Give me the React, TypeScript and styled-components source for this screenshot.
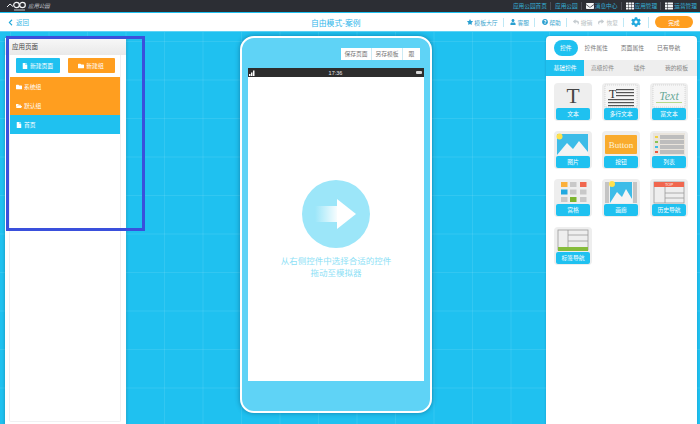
import React from 'react';
import styled, { createGlobalStyle } from 'styled-components';
import {
  FaChevronLeft, FaCog, FaEnvelope, FaFile, FaFolder, FaFolderOpen, FaQuestionCircle,
  FaReply, FaShare, FaStar, FaTh, FaThList, FaUser,
} from 'react-icons/fa';

const CYAN = '#1fc1f0';
const ORANGE = '#ff9e1f';

const GlobalStyle = createGlobalStyle`
  html, body { margin: 0; padding: 0; height: 100%; }
  body { font-family: "Noto Sans CJK SC", "Liberation Sans", sans-serif; overflow: hidden; }
`;

const Page = styled.div`
  position: relative;
  width: 700px;
  height: 424px;
  display: flex;
  flex-direction: column;
  overflow: hidden;
  background: ${CYAN};
`;

const TopBar = styled.div`
  height: 12px;
  flex: none;
  background: #2c2e34;
  display: flex;
  align-items: center;
  justify-content: space-between;
  padding-left: 7px;
  border-bottom: 1px solid ${CYAN};
`;

const Logo = styled.div`
  display: flex;
  align-items: center;
  gap: 1px;
  color: #c9ccd2;
  font-size: 5.4px;
  font-style: italic;
`;

const TopNav = styled.div`
  display: flex;
  align-items: center;
  color: #35aed6;
  font-size: 5.7px;
  line-height: 12px;
`;

const TopLink = styled.span`
  display: flex;
  align-items: center;
  gap: 1px;
  padding: 0 3px 0 4px;
  white-space: nowrap;
  border-left: ${(p) => (p.$first ? 'none' : '1px solid #4a4d55')};
  height: 8px;
  line-height: 8px;
  svg { color: #f2f4f6; font-size: 8px; }
`;

const ActionBar = styled.div`
  height: 18px;
  flex: none;
  background: #fff;
  display: grid;
  grid-template-columns: 304px auto 1fr;
  align-items: center;
  border-bottom: 1px solid #5fd3f5;
  padding: 0 7px;
`;

const BackLink = styled.span`
  display: flex;
  align-items: center;
  gap: 2px;
  color: #35b8e6;
  font-size: 6.5px;
  svg { font-size: 7px; color: #1fa8d8; }
`;

const PageTitle = styled.div`
  color: #2fb6ea;
  font-size: 7.8px;
  white-space: nowrap;
`;

const Actions = styled.div`
  display: flex;
  align-items: center;
  justify-content: flex-end;
`;

const Action = styled.span`
  display: flex;
  align-items: center;
  gap: 1.5px;
  padding: 0 5px 0 6.5px;
  height: 9px;
  font-size: 5.8px;
  white-space: nowrap;
  color: #3da6cf;
  border-right: 1px solid #bfe8f5;
  svg { font-size: 6px; color: #2a9fd0; }
`;

const HistoryGroup = styled.span`
  display: flex;
  align-items: center;
  gap: 6px;
  padding: 0 5px 0 6px;
  height: 9px;
  border-right: 1px solid #bfe8f5;
`;

const HistoryItem = styled.span`
  display: flex;
  align-items: center;
  gap: 2px;
  font-size: 5.8px;
  white-space: nowrap;
  color: #b9bfc4;
  svg { font-size: 6px; color: #c6ccd0; }
`;

const GearButton = styled.span`
  display: flex;
  align-items: center;
  padding: 0 7px;
  height: 11px;
  color: #22a9de;
  font-size: 10px;
  border-right: 1px solid #bfe8f5;
`;

const DoneButton = styled.button`
  width: 38px;
  height: 12px;
  margin: 0 0 0 6px;
  padding: 0;
  border: 0;
  border-radius: 6px;
  background: ${ORANGE};
  color: #fff;
  font: 5.8px "Noto Sans CJK SC", sans-serif;
`;

const Workspace = styled.div`
  flex: 1;
  min-height: 0;
  display: flex;
  justify-content: space-between;
  align-items: flex-start;
  padding: 4px 3px 0 5px;
  background-color: ${CYAN};
  background-image:
    linear-gradient(rgba(255, 255, 255, 0.09) 1px, transparent 1px),
    linear-gradient(90deg, rgba(255, 255, 255, 0.09) 1px, transparent 1px);
  background-size: 38.5px 38.5px;
  background-position: 10px 9px;
`;

const LeftPanel = styled.aside`
  width: 121px;
  height: 388px;
  margin-top: 2px;
  background: #fff;
  box-shadow: 0 0 3px rgba(0, 0, 0, 0.25);
  display: flex;
  flex-direction: column;
`;

const LeftHeader = styled.div`
  height: 17px;
  flex: none;
  padding-left: 7px;
  font-size: 6.5px;
  line-height: 17px;
  color: #444;
  background: linear-gradient(#f8f8f8, #e9e9e9);
`;

const LeftBody = styled.div`
  flex: 1;
  margin: 0 5px 4px 4px;
  border: solid #f0f0f2;
  border-width: 0 1px 1px;
  border-radius: 0 0 2px 2px;
  display: flex;
  flex-direction: column;
`;

const ButtonRow = styled.div`
  display: flex;
  justify-content: center;
  gap: 8px;
  padding: 3px 0 4px;
`;

const NewButton = styled.button`
  height: 15px;
  width: ${(p) => p.$w}px;
  margin: 0;
  padding: 0;
  border: 0;
  border-radius: 1px;
  display: flex;
  align-items: center;
  justify-content: center;
  gap: 2px;
  color: #fff;
  font: 5.8px "Noto Sans CJK SC", sans-serif;
  background: ${(p) => p.$bg};
  svg { font-size: 6px; }
`;

const TreeRow = styled.div`
  height: 19px;
  display: flex;
  align-items: center;
  gap: 2px;
  padding-left: 6px;
  color: #fff;
  font-size: 5.8px;
  background: ${(p) => p.$bg};
  svg { font-size: 6px; }
`;

const Phone = styled.main`
  width: 192px;
  height: 377px;
  box-sizing: border-box;
  padding: 10px 6px 30px;
  background: #5fd3f6;
  border: 2px solid #fff;
  border-radius: 14px;
  box-shadow: 0 0 5px rgba(0, 50, 80, 0.45);
  display: flex;
  flex-direction: column;
`;

const PhoneTools = styled.div`
  height: 12px;
  flex: none;
  align-self: flex-end;
  margin: 0 4px 8px 0;
  display: flex;
  background: #fff;
`;

const PhoneTool = styled.span`
  width: ${(p) => p.$w}px;
  line-height: 12px;
  text-align: center;
  white-space: nowrap;
  color: #777;
  font-size: 5.8px;
  border-left: ${(p) => (p.$first ? 'none' : '1px solid #cdeaf4')};
`;

const StatusBar = styled.div`
  height: 9px;
  flex: none;
  display: grid;
  grid-template-columns: 1fr auto 1fr;
  align-items: center;
  padding: 0 2px 0 1px;
  background: #2d2d2d;
  color: #e8e8e8;
  font: 5.5px "Liberation Sans", sans-serif;
`;

const Battery = styled.span`
  justify-self: end;
  width: 6px;
  height: 3px;
  background: #d8d8d8;
  border-radius: 1px;
`;

const Screen = styled.div`
  flex: 1;
  background: #fff;
  display: flex;
  flex-direction: column;
  align-items: center;
  justify-content: center;
`;

const HintCircle = styled.div`
  width: 68px;
  height: 68px;
  border-radius: 50%;
  background: #9ce6f9;
  margin-bottom: 6px;
  display: flex;
  align-items: center;
  justify-content: center;
`;

const HintText = styled.div`
  color: #8edff6;
  font-size: 8.5px;
  line-height: 12px;
  text-align: center;
`;

const RightPanel = styled.aside`
  width: 151px;
  height: 392px;
  background: #fff;
  border-radius: 4px 4px 0 0;
  box-shadow: 0 0 2px rgba(0, 60, 90, 0.3);
  display: flex;
  flex-direction: column;
`;

const MainTabs = styled.div`
  height: 24px;
  flex: none;
  display: flex;
  align-items: center;
  gap: 13px;
  padding-left: 8px;
`;

const MainTab = styled.span`
  height: 16px;
  line-height: 16px;
  padding: 0 ${(p) => (p.$active ? 6 : 0)}px;
  margin-right: ${(p) => (p.$active ? -6 : 0)}px;
  border-radius: 8px;
  white-space: nowrap;
  font-size: 5.8px;
  color: ${(p) => (p.$active ? '#fff' : '#777')};
  background: ${(p) => (p.$active ? CYAN : 'transparent')};
`;

const SubTabs = styled.div`
  height: 16px;
  flex: none;
  display: grid;
  grid-template-columns: 38px 1fr 1fr 1fr;
  padding-right: 2px;
  background: #eeeeee;
`;

const SubTab = styled.span`
  line-height: 16px;
  text-align: center;
  white-space: nowrap;
  font-size: 5.8px;
  color: ${(p) => (p.$active ? '#fff' : '#888')};
  background: ${(p) => (p.$active ? CYAN : 'transparent')};
`;

const TileGrid = styled.div`
  display: grid;
  grid-template-columns: repeat(3, 38px);
  grid-auto-rows: 38px;
  gap: 10px;
  padding: 7px 0 0 8px;
`;

const Tile = styled.div`
  background: #eeeeee;
  border-radius: 4px;
  display: flex;
  flex-direction: column;
  padding: 1px 2px 1px;
  box-sizing: border-box;
`;

const TileArt = styled.div`
  flex: 1;
  min-height: 0;
  svg { display: block; width: 100%; height: 100%; }
`;

const TileLabel = styled.div`
  height: 12px;
  flex: none;
  line-height: 12px;
  border-radius: 2px;
  text-align: center;
  color: #fff;
  font-size: 5.8px;
  background: ${CYAN};
`;

const Annotation = styled.div`
  position: absolute;
  left: 6px;
  top: 36px;
  width: 139px;
  height: 195px;
  box-sizing: border-box;
  border: 3px solid #3a50dc;
  pointer-events: none;
`;

const art: Record<string, React.ReactNode> = {
  文本: (
    <svg viewBox="0 0 34 24">
      <text x="17" y="19" textAnchor="middle" fontFamily="Liberation Serif" fontSize="21.500" fill="#444">T</text>
    </svg>
  ),
  多行文本: (
    <svg viewBox="0 0 34 24">
      <rect x="1" y="1" width="32" height="22" fill="#f6f6f6" stroke="#bbb" strokeWidth=".5" strokeDasharray="1 1" />
      <text x="5" y="14" fontFamily="Liberation Serif" fontSize="12" fill="#333">T</text>
      {[5, 8, 11].map((y) => <rect key={y} x="12" y={y} width="18" height="1.2" fill="#555" />)}
      {[15, 18, 21].map((y) => <rect key={y} x="4" y={y} width="26" height="1.2" fill="#555" />)}
    </svg>
  ),
  富文本: (
    <svg viewBox="0 0 34 24">
      <rect x="1" y="1" width="32" height="22" fill="#f6f6f6" stroke="#bbb" strokeWidth=".5" strokeDasharray="1 1" />
      <text x="17" y="16" textAnchor="middle" fontFamily="Liberation Serif" fontStyle="italic" fontSize="12" fill="#6aaa9a">Text</text>
      <rect x="4" y="18" width="26" height="1" fill="#b9d98a" />
    </svg>
  ),
  图片: (
    <svg viewBox="0 0 34 24">
      <rect x="1" y="2" width="31" height="21" fill="#3dbce8" />
      <path d="M1 23 L11 11 L17 17 L23 9 L32 20 L32 23Z" fill="#f4f4f4" />
      <circle cx="3.5" cy="4.5" r="3" fill="#ffe14d" />
    </svg>
  ),
  按钮: (
    <svg viewBox="0 0 34 24">
      <rect x="1" y="3" width="32" height="19" rx="1" fill="#f9ab2d" />
      <text x="17" y="16" textAnchor="middle" fontFamily="Liberation Serif" fontSize="9" fill="#fff3d8">Button</text>
    </svg>
  ),
  列表: (
    <svg viewBox="0 0 34 24">
      <rect x="1" y="1" width="32" height="22" fill="#e9e4dc" />
      {[3, 8, 13, 18].map((y) => <rect key={y} x="8" y={y} width="24" height="4" fill="#bdbdbd" />)}
      <rect x="3" y="4" width="3" height="2" fill="#f0d040" />
      <rect x="3" y="9" width="3" height="2" fill="#8cc152" />
      <rect x="3" y="14" width="3" height="2" fill="#3dbce8" />
      <rect x="3" y="19" width="3" height="2" fill="#e9573f" />
    </svg>
  ),
  宫格: (
    <svg viewBox="0 0 34 24">
      {[
        ['#fbb03b', 5, 2], ['#c8c8c8', 14, 2], ['#f0674f', 24, 2],
        ['#1fa8e0', 5, 9.5], ['#c8c8c8', 14, 9.5], ['#c8c8c8', 24, 9.5],
        ['#c8c8c8', 5, 17], ['#7db52f', 14, 17], ['#c8c8c8', 24, 17],
      ].map(([c, x, y], i) => <rect key={i} x={x as number} y={y as number} width="6.5" height="5" fill={c as string} />)}
    </svg>
  ),
  画廊: (
    <svg viewBox="0 0 34 24">
      <rect x="1" y="2" width="4" height="21" fill="#c4c4c4" />
      <rect x="29" y="2" width="4" height="21" fill="#c4c4c4" />
      <rect x="6" y="2" width="22" height="21" fill="#3dbce8" />
      <path d="M6 23 L13 12 L18 17 L22 9 L28 19 L28 23Z" fill="#f4f4f4" />
      <circle cx="8" cy="4" r="3" fill="#ffe14d" />
    </svg>
  ),
  历史导航: (
    <svg viewBox="0 0 34 24">
      <rect x="2" y="2" width="30" height="21" fill="#eee" stroke="#999" strokeWidth=".8" />
      <rect x="2" y="2" width="30" height="5" fill="#f0674f" />
      <text x="17" y="6.4" textAnchor="middle" fontFamily="Liberation Sans" fontSize="4" fill="#fff">TOP</text>
      <path d="M13 7V23M13 13H32M13 18H32" stroke="#999" strokeWidth=".8" />
    </svg>
  ),
  标签导航: (
    <svg viewBox="0 0 34 24">
      <rect x="2" y="2" width="30" height="20" fill="#eee" stroke="#999" strokeWidth=".8" />
      <path d="M12 2V19M12 7H32M12 13H32" stroke="#999" strokeWidth=".8" />
      <rect x="2" y="19" width="30" height="4" fill="#86bc3b" />
    </svg>
  ),
};

const tiles = ['文本', '多行文本', '富文本', '图片', '按钮', '列表', '宫格', '画廊', '历史导航', '标签导航'];

export default function App() {
  return (
    <Page>
      <GlobalStyle />
      <TopBar>
        <Logo>
          <svg width="20" height="11" viewBox="0 0 20 11">
            <path d="M0 6 L3 3 L6 5.500" fill="none" stroke="#f2f4f6" strokeWidth="1" />
            <ellipse cx="9.500" cy="4" rx="2.800" ry="2.600" fill="none" stroke="#f2f4f6" strokeWidth="1.200" />
            <ellipse cx="15.500" cy="4" rx="2.800" ry="2.600" fill="none" stroke="#f2f4f6" strokeWidth="1.200" />
            <rect x="7" y="8.500" width="11" height="1" fill="#c0c3c8" />
          </svg>
          <span>应用公园</span>
        </Logo>
        <TopNav>
          <TopLink $first>应用公园首页</TopLink>
          <TopLink>应用公园</TopLink>
          <TopLink><FaEnvelope />消息中心</TopLink>
          <TopLink><FaTh />应用管理</TopLink>
          <TopLink><FaThList />运营管理</TopLink>
        </TopNav>
      </TopBar>
      <ActionBar>
        <BackLink><FaChevronLeft />返回</BackLink>
        <PageTitle>自由模式-案例</PageTitle>
        <Actions>
          <Action><FaStar />模板大厅</Action>
          <Action><FaUser />客服</Action>
          <Action><FaQuestionCircle />帮助</Action>
          <HistoryGroup>
            <HistoryItem><FaReply />撤销</HistoryItem>
            <HistoryItem><FaShare />恢复</HistoryItem>
          </HistoryGroup>
          <GearButton><FaCog /></GearButton>
          <DoneButton>完成</DoneButton>
        </Actions>
      </ActionBar>
      <Workspace>
        <LeftPanel>
          <LeftHeader>应用页面</LeftHeader>
          <LeftBody>
            <ButtonRow>
              <NewButton $w={44} $bg={CYAN}><FaFile />新建页面</NewButton>
              <NewButton $w={47} $bg={ORANGE}><FaFolder />新建组</NewButton>
            </ButtonRow>
            <TreeRow $bg={ORANGE}><FaFolder />系统组</TreeRow>
            <TreeRow $bg={ORANGE}><FaFolderOpen />默认组</TreeRow>
            <TreeRow $bg={CYAN}><FaFile />首页</TreeRow>
          </LeftBody>
        </LeftPanel>
        <Phone>
          <PhoneTools>
            <PhoneTool $first $w={30}>保存页面</PhoneTool>
            <PhoneTool $w={30}>另存模板</PhoneTool>
            <PhoneTool $w={17}>跟</PhoneTool>
          </PhoneTools>
          <StatusBar>
            <svg width="7" height="7" viewBox="0 0 7 7">
              <path d="M0 5h1.500v2H0zM2 3.500h1.500V7H2zM4 1.500h1.500V7H4z" fill="#fff" />
            </svg>
            <span>17:36</span>
            <Battery />
          </StatusBar>
          <Screen>
            <HintCircle>
              <svg width="42" height="30" viewBox="0 0 42 30">
                <defs>
                  <linearGradient id="tail" x1="0" x2="1" y1="0" y2="0">
                    <stop offset="0" stopColor="#fff" stopOpacity="0" />
                    <stop offset="1" stopColor="#fff" />
                  </linearGradient>
                </defs>
                <rect x="0" y="7" width="24" height="16" fill="url(#tail)" />
                <path d="M22 0 L41 15 L22 30Z" fill="#fff" />
              </svg>
            </HintCircle>
            <HintText>从右侧控件中选择合适的控件<br />拖动至模拟器</HintText>
          </Screen>
        </Phone>
        <RightPanel>
          <MainTabs>
            <MainTab $active>控件</MainTab>
            <MainTab>控件属性</MainTab>
            <MainTab>页面属性</MainTab>
            <MainTab>已有导航</MainTab>
          </MainTabs>
          <SubTabs>
            <SubTab $active>基础控件</SubTab>
            <SubTab>高级控件</SubTab>
            <SubTab>插件</SubTab>
            <SubTab>我的模板</SubTab>
          </SubTabs>
          <TileGrid>
            {tiles.map((name) => (
              <Tile key={name}>
                <TileArt>{art[name]}</TileArt>
                <TileLabel>{name}</TileLabel>
              </Tile>
            ))}
          </TileGrid>
        </RightPanel>
      </Workspace>
      <Annotation />
    </Page>
  );
}
